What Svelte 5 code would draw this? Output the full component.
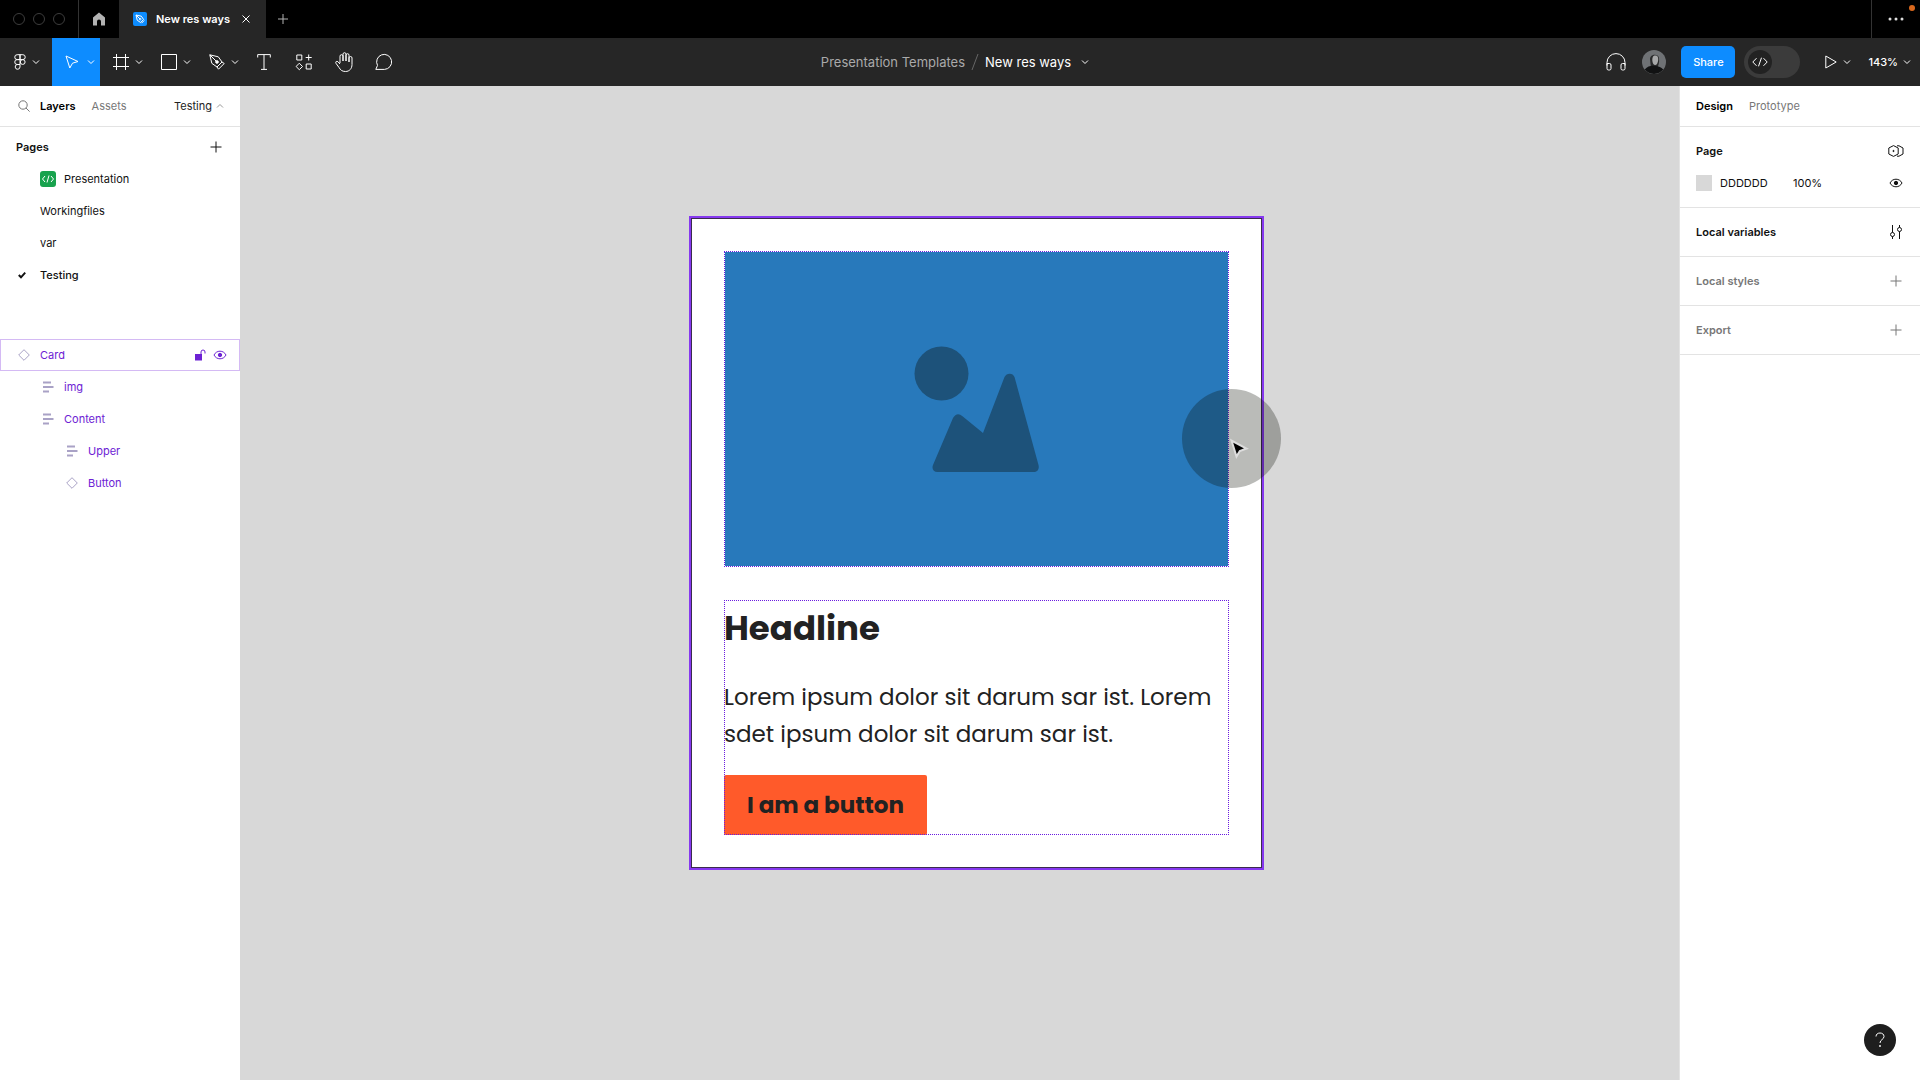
<script lang="ts">
	const pages = [
		{ name: 'Presentation', badge: true },
		{ name: 'Workingfiles' },
		{ name: 'var' },
		{ name: 'Testing', current: true }
	];

	const layers = [
		{ name: 'Card', depth: 0, kind: 'component', hovered: true },
		{ name: 'img', depth: 1, kind: 'stack' },
		{ name: 'Content', depth: 1, kind: 'stack' },
		{ name: 'Upper', depth: 2, kind: 'stack' },
		{ name: 'Button', depth: 2, kind: 'component' }
	];

	const sections = ['Local styles', 'Export'];

	let fill = $state('DDDDDD');
	let opacity = $state('100%');
	let devMode = $state(false);
</script>

{#snippet chevron()}
	<svg class="chevron" width="8" height="8" viewBox="0 0 8 8"><path d="M1 2.500l3 3 3-3" /></svg>
{/snippet}

{#snippet plus()}
	<svg width="12" height="12" viewBox="0 0 12 12"><path d="M6 .5v11M.5 6h11" /></svg>
{/snippet}

{#snippet eye()}
	<svg width="14" height="10" viewBox="0 0 14 10">
		<path d="M1 5C2.300 2.500 4.500 1.200 7 1.200S11.700 2.500 13 5C11.700 7.500 9.500 8.800 7 8.800S2.300 7.500 1 5z" />
		<circle cx="7" cy="5" r="1.700" class="solid" />
	</svg>
{/snippet}

<div class="app">
	<header class="tab-bar">
		<div class="window-dots"><i></i><i></i><i></i></div>
		<button class="home" aria-label="Home">
			<svg width="14" height="16" viewBox="0 0 14 16"><path d="M7 1.500L1 6.500v8H5V10.500a2 2 0 0 1 4 0v4h4v-8z" /></svg>
		</button>
		<div class="file-tab">
			<svg class="file-icon" width="14" height="14" viewBox="0 0 14 14">
				<rect width="14" height="14" rx="2" class="file-bg" />
				<path d="M3 3l1.200 5.200 3.400 2.300 3-3-2.300-3.300zM3 3l4 4M8.500 11.200l2.700-2.700" />
				<circle cx="7.200" cy="7.200" r=".8" />
			</svg>
			<span>New res ways</span>
			<button class="close" aria-label="Close tab">
				<svg width="8" height="8" viewBox="0 0 8 8"><path d="M.5.5l7 7M7.500.5l-7 7" /></svg>
			</button>
		</div>
		<button class="new-tab" aria-label="New tab">
			<svg width="10" height="10" viewBox="0 0 10 10"><path d="M5 0v10M0 5h10" /></svg>
		</button>
		<button class="more" aria-label="More">
			<svg width="16" height="4" viewBox="0 0 16 4"><circle cx="2" cy="2" r="1.500" /><circle cx="8" cy="2" r="1.500" /><circle cx="14" cy="2" r="1.500" /></svg>
			<i class="notice"></i>
		</button>
	</header>

	<nav class="toolbar">
		<div class="tools">
			<button class="tool menu" aria-label="Main menu">
				<svg width="12" height="16" viewBox="0 0 12 16"><path d="M6 .7H3.200a2.400 2.400 0 0 0 0 4.900H6zM6 .7h2.800a2.400 2.400 0 0 1 0 4.900H6zM6 5.600H3.200a2.400 2.400 0 0 0 0 4.900H6zM6 10.500H3.200A2.400 2.400 0 1 0 6 12.900z" /><circle cx="8.700" cy="8" r="2.400" /></svg>
				{@render chevron()}
			</button>
			<button class="tool active" aria-label="Move">
				<svg width="14" height="14" viewBox="0 0 14 14"><path d="M1 1l3.800 12L7.500 8.200 13 6.500z" /></svg>
				{@render chevron()}
			</button>
			<button class="tool" aria-label="Frame">
				<svg width="16" height="16" viewBox="0 0 16 16"><path d="M3.500 0v16M12.500 0v16M0 3.500h16M0 12.500h16" /></svg>
				{@render chevron()}
			</button>
			<button class="tool" aria-label="Rectangle">
				<svg width="16" height="16" viewBox="0 0 16 16"><path d="M.5.5h15v15H.5z" /></svg>
				{@render chevron()}
			</button>
			<button class="tool" aria-label="Pen">
				<svg width="16" height="16" viewBox="0 0 16 16"><path d="M.8.8l2 8.500 5.200 3.700 1.500 2.200 5.700-5.700-2.200-1.500-3.700-5.200zM.8.8l6.400 6.400M8 13l5-5" /><circle cx="8" cy="8" r="1.300" class="filled" /></svg>
				{@render chevron()}
			</button>
			<button class="tool single" aria-label="Text">
				<svg width="14" height="16" viewBox="0 0 14 16"><path d="M.7 3.500V.6h12.600v2.900M7 .6v14.800M4 15.400h6" /></svg>
			</button>
			<button class="tool single" aria-label="Resources">
				<svg width="16" height="16" viewBox="0 0 16 16"><path d="M.8 1h5v5h-5zM10.200 10h5v5h-5zM12.700.5v6M9.700 3.500h6M3.300 9.200l3.200 3.300-3.200 3.200L.1 12.500z" /></svg>
			</button>
			<button class="tool single" aria-label="Hand">
				<svg width="18" height="20" viewBox="0 0 18 20"><path d="M5 11V4.200a1.500 1.500 0 0 1 3 0V9 2.200a1.500 1.500 0 0 1 3 0V9 3.200a1.500 1.500 0 0 1 3 0V10 6a1.500 1.500 0 0 1 3 0v6.500c0 4-2.500 7-6.500 7-3.500 0-5-1.500-6.500-4L.9 11.200c-.7-1.500.9-2.500 2-1.500L5 12" /></svg>
			</button>
			<button class="tool single" aria-label="Comment">
				<svg width="18" height="16" viewBox="0 0 18 16"><path d="M.8 15.400l1.700-4A7.500 7.500 0 1 1 9.500 15.400z" /></svg>
			</button>
		</div>

		<div class="file-name">
			<a href="#project">Presentation Templates</a>
			<svg width="8" height="16" viewBox="0 0 8 16"><path d="M7 0L1 16" /></svg>
			<button>New res ways {@render chevron()}</button>
		</div>

		<div class="session">
			<button class="headphones" aria-label="Audio">
				<svg width="20" height="18" viewBox="0 0 20 18"><path d="M1 12.500V9.500a9 8.900 0 0 1 18 0v3M1 10.500h2.500a1.500 1.500 0 0 1 1.500 1.500v3.500A1.500 1.500 0 0 1 3.500 17h-1A1.500 1.500 0 0 1 1 15.500zM19 10.500h-2.500A1.500 1.500 0 0 0 15 12v3.500a1.500 1.500 0 0 0 1.500 1.500h1a1.500 1.500 0 0 0 1.500-1.500z" /></svg>
			</button>
			<svg class="avatar" width="24" height="24" viewBox="0 0 24 24">
				<circle cx="12" cy="12" r="12" fill="#6f7275" />
				<path d="M8 9c0-5 8-6 9-1 .5 4-.5 8-2 10H9z" fill="#292a2b" />
				<path d="M12.500 5.500c3-.5 4 1.500 3.700 4.500-.3 3-1.500 5-3 5-1.700 0-2.700-2-2.900-4.500-.1-2.500.5-4.700 2.200-5z" fill="#a7a8a9" />
				<path d="M2.700 19.500C6 16 9 15.500 13 16c4 .2 6 1 8.300 3.500a12 12 0 0 1-18.600 0z" fill="#111213" />
			</svg>
			<button class="share">Share</button>
			<label class="dev-mode">
				<input type="checkbox" bind:checked={devMode} aria-label="Dev Mode" />
				<span class="knob"><svg width="16" height="10" viewBox="0 0 16 10"><path d="M4.500 1.200L.8 5l3.700 3.800M11.500 1.200L15.200 5l-3.700 3.800M9.500.7l-3 8.600" /></svg></span>
			</label>
			<button class="present" aria-label="Present">
				<svg width="12" height="14" viewBox="0 0 12 14"><path d="M.8 1v12l10.400-6z" /></svg>
				{@render chevron()}
			</button>
			<button class="zoom">143% {@render chevron()}</button>
		</div>
	</nav>

	<main>
		<aside class="layers-panel">
			<div class="panel-tabs">
				<button class="search" aria-label="Search">
					<svg width="12" height="12" viewBox="0 0 12 12"><circle cx="5" cy="5" r="4.200" /><path d="M8 8l3.600 3.600" /></svg>
				</button>
				<button class="current">Layers</button>
				<button class="assets">Assets</button>
				<button class="page-switch">Testing <svg width="8" height="8" viewBox="0 0 8 8"><path d="M1 5.500l3-3 3 3" /></svg></button>
			</div>
			<div class="pages-head">
				<h2>Pages</h2>
				<button aria-label="Add page">{@render plus()}</button>
			</div>
			<ul class="pages">
				{#each pages as page}
					<li>
						<button class="row" class:selected={page.current}>
							<span class="tick">
								{#if page.current}
									<svg width="8" height="8" viewBox="0 0 8 8"><path d="M.8 4l2.200 2.300 4.200-4.600" /></svg>
								{/if}
							</span>
							{#if page.badge}
								<svg class="badge" width="16" height="16" viewBox="0 0 16 16"><rect width="16" height="16" rx="3" /><path d="M5 5L2.500 8 5 11M11 5l2.500 3L11 11M9 4.500l-2 7" /></svg>
							{/if}
							{page.name}
						</button>
					</li>
				{/each}
			</ul>
			<ul class="layers">
				{#each layers as layer}
					<li class="layer depth-{layer.depth}" class:hovered={layer.hovered}>
						<button class="row">
							{#if layer.kind === 'component'}
								<svg width="12" height="12" viewBox="0 0 12 12"><path d="M6 .7L11.300 6 6 11.300.7 6z" /></svg>
							{:else}
								<svg width="12" height="12" viewBox="0 0 12 12"><path d="M1 1.500h8M1 6h10.500M1 10.500h6" class="bars" /></svg>
							{/if}
							{layer.name}
						</button>
						{#if layer.hovered}
							<button aria-label="Lock">
								<svg width="12" height="12" viewBox="0 0 12 12"><rect x="1.500" y="5.500" width="6" height="5.500" class="solid" /><path d="M7 5.500V3a2 2 0 0 1 4 0v1.500" /></svg>
							</button>
							<button aria-label="Hide">{@render eye()}</button>
						{/if}
					</li>
				{/each}
			</ul>
		</aside>

		<section class="canvas">
			<article class="card">
				<div class="image">
					<svg width="126" height="126" viewBox="0 0 126 126">
						<circle cx="27.500" cy="27.500" r="27" />
						<path d="M39 72c2.500-4.500 6-5 9.500-1.800L69 87 90.500 31c2-4.500 8.500-4.500 10 0L124.500 119c1 4-1 7-5 7H23.500c-4 0-6-3-4.500-7z" />
					</svg>
				</div>
				<div class="content">
					<h1>Headline</h1>
					<p>Lorem ipsum dolor sit darum sar ist. Lorem sdet ipsum dolor sit darum sar ist.</p>
					<button>I am a button</button>
				</div>
			</article>
			<div class="pointer">
				<svg width="18" height="20" viewBox="0 0 18 20"><path d="M1.500 1.500l5 16L9.800 12l6.700-2.500z" /></svg>
			</div>
		</section>

		<aside class="design-panel">
			<div class="panel-tabs">
				<button class="current">Design</button>
				<button>Prototype</button>
			</div>
			<section class="page-section">
				<div class="line">
					<h2>Page</h2>
					<button aria-label="Variable modes">
						<svg width="16" height="12" viewBox="0 0 16 12"><path d="M5.500.6L10.200 3v6l-4.700 2.400L.8 9V3zM9 .8h2L15 3v6l-4 2.200H9" /><circle cx="5.500" cy="6" r=".6" class="solid" /></svg>
					</button>
				</div>
				<div class="line">
					<i class="swatch"></i>
					<input class="hex" bind:value={fill} aria-label="Page colour" />
					<input class="opacity" bind:value={opacity} aria-label="Opacity" />
					<button aria-label="Toggle visibility">{@render eye()}</button>
				</div>
			</section>
			<section class="line">
				<h2>Local variables</h2>
				<button aria-label="Open variables">
					<svg width="14" height="14" viewBox="0 0 14 14"><path d="M3.500 0v7.500M3.500 11.500V14M10.500 0v2.500M10.500 6.500V14" /><circle cx="3.500" cy="9.500" r="2" /><circle cx="10.500" cy="4.500" r="2" /></svg>
				</button>
			</section>
			{#each sections as section}
				<section class="line muted">
					<h2>{section}</h2>
					<button aria-label="Add to {section}">{@render plus()}</button>
				</section>
			{/each}
			<button class="help" aria-label="Help">
				<svg width="10" height="16" viewBox="0 0 10 16"><path d="M1 4.500C1 2.300 2.700 1 5 1s4 1.300 4 3.500C9 7.500 5 7.500 5 11" /><circle cx="5" cy="14" r=".6" /></svg>
			</button>
		</aside>
	</main>
</div>

<style>
	:global(body) {
		margin: 0;
		background: #fff;
	}

	.app {
		--line: #e3e3e3;
		--blue: #0d8cff;
		--purple: #6d22d4;
		display: flex;
		flex-direction: column;
		min-height: 100vh;
		font: 11px/16px Inter, sans-serif;
		color: #111;
	}

	.app * {
		box-sizing: border-box;
	}

	button,
	input {
		margin: 0;
		padding: 0;
		border: 0;
		background: none;
		font: inherit;
		color: inherit;
	}

	button {
		display: flex;
		align-items: center;
		justify-content: center;
	}

	h1,
	h2,
	p,
	ul {
		margin: 0;
		padding: 0;
		list-style: none;
	}

	h2 {
		font-size: 11px;
		font-weight: 600;
	}

	svg {
		flex: none;
		fill: none;
		stroke: currentColor;
		overflow: visible;
	}

	.solid {
		fill: currentColor;
	}

	/* Window tabs */
	.tab-bar {
		display: flex;
		height: 38px;
		background: #000;
		color: #b3b3b3;
	}

	.window-dots {
		display: flex;
		align-items: center;
		gap: 8px;
		width: 79px;
		padding-left: 13px;
		border-right: 1px solid #333;
	}

	.window-dots i {
		width: 12px;
		height: 12px;
		border: 1px solid #3d3d3d;
		border-radius: 50%;
	}

	.home {
		width: 40px;
	}

	.home svg,
	.more svg {
		fill: currentColor;
		stroke: none;
	}

	.file-tab {
		display: flex;
		align-items: center;
		width: 147px;
		padding: 0 16px 0 14px;
		background: #262626;
		color: #fff;
		font-weight: 600;
	}

	.file-icon {
		margin-right: 9px;
	}

	.file-bg {
		fill: var(--blue);
		stroke: none;
	}

	.close {
		margin-left: auto;
	}

	.new-tab {
		width: 34px;
	}

	.more {
		position: relative;
		width: 49px;
		margin-left: auto;
		border-left: 1px solid #333;
		color: #ddd;
	}

	.notice {
		position: absolute;
		top: 5px;
		right: 5px;
		width: 6px;
		height: 6px;
		border-radius: 50%;
		background: #d9681d;
	}

	/* Toolbar */
	.toolbar {
		display: grid;
		grid-template-columns: 1fr auto 1fr;
		height: 48px;
		background: #262626;
		color: #fff;
	}

	.tools,
	.session,
	.file-name {
		display: flex;
		align-items: center;
	}

	.tool {
		justify-content: flex-end;
		gap: 6px;
		width: 48px;
		height: 48px;
		padding-right: 5px;
	}

	.menu {
		width: 52px;
		padding-right: 12px;
	}

	.active {
		gap: 8px;
		background: var(--blue);
	}

	.single {
		justify-content: center;
		width: 40px;
		padding: 0;
	}

	.filled {
		fill: #fff;
	}

	.file-name {
		gap: 6px;
		padding-right: 10px;
		font-size: 13px;
	}

	.file-name a {
		color: #aaa;
		text-decoration: none;
	}

	.file-name > svg {
		color: #666;
	}

	.file-name button {
		gap: 10px;
	}

	.session {
		justify-content: flex-end;
		padding-right: 9px;
		font-weight: 500;
	}

	.headphones {
		margin-right: 16px;
	}

	.avatar {
		margin-right: 15px;
		stroke: none;
	}

	.share {
		width: 54px;
		height: 32px;
		margin-right: 9px;
		border-radius: 5px;
		background: var(--blue);
	}

	.dev-mode {
		display: flex;
		align-items: center;
		width: 56px;
		height: 32px;
		padding: 0 4px;
		margin-right: 25px;
		border-radius: 16px;
		background: #3b3b3b;
	}

	.dev-mode input {
		position: absolute;
		opacity: 0;
	}

	.knob {
		display: grid;
		place-items: center;
		width: 24px;
		height: 24px;
		border-radius: 50%;
		background: #222;
	}

	.dev-mode input:checked + .knob {
		margin-left: auto;
	}

	.present {
		gap: 6px;
		margin-right: 17px;
	}

	.zoom {
		gap: 5px;
	}

	/* Panels */
	main {
		flex: 1;
		display: grid;
		grid-template-columns: 240px minmax(0, 1fr) 241px;
	}

	.panel-tabs {
		display: flex;
		align-items: center;
		gap: 16px;
		height: 41px;
		padding: 0 16px;
		border-bottom: 1px solid var(--line);
		color: #777;
	}

	.current {
		font-weight: 600;
		color: #000;
	}

	.search {
		width: 16px;
		margin-right: -8px;
	}

	.page-switch {
		gap: 4px;
		margin-left: auto;
		color: #222;
	}

	.page-switch svg {
		color: #999;
	}

	.pages-head {
		display: flex;
		align-items: center;
		justify-content: space-between;
		height: 36px;
		padding: 4px 18px 0 16px;
	}

	.row {
		width: 100%;
		height: 32px;
		justify-content: flex-start;
		gap: 8px;
	}

	.pages .row {
		padding-left: 16px;
	}

	.tick {
		display: grid;
		place-items: center;
		width: 12px;
		margin-right: 4px;
	}

	.tick svg {
		stroke-width: 2;
	}

	.badge rect {
		fill: #18a24e;
		stroke: none;
	}

	.badge path {
		stroke: #fff;
	}

	.selected {
		font-weight: 500;
	}

	.layers {
		margin-top: 48px;
		color: var(--purple);
	}

	.layer {
		display: flex;
		align-items: center;
		gap: 7px;
		height: 32px;
		padding: 0 13px 0 18px;
	}

	.layer .row {
		flex: 1;
		gap: 10px;
	}

	.layer .row svg {
		color: #a9a2c6;
	}

	.bars {
		stroke-width: 2;
	}

	.depth-1 {
		padding-left: 42px;
	}

	.depth-2 {
		padding-left: 66px;
	}

	.hovered {
		outline: 1px solid #d4baf4;
		outline-offset: -1px;
	}

	/* Canvas */
	.canvas {
		position: relative;
		overflow: hidden;
		background: #d8d8d8;
	}

	.card {
		position: absolute;
		top: 130px;
		left: 449px;
		display: flex;
		flex-direction: column;
		gap: 33px;
		width: 575px;
		padding: 33px;
		border: 2px solid #8638f0;
		outline: 1px solid #3b2c4d;
		outline-offset: -3px;
		background: #fff;
	}

	.image {
		display: grid;
		place-items: center;
		height: 316px;
		border: 1px dotted #6a1be0;
		background: #2879bb;
		background-clip: padding-box;
	}

	.image svg {
		fill: #1d527a;
		stroke: none;
	}

	.content {
		display: flex;
		flex-direction: column;
		align-items: flex-start;
		height: 235px;
		outline: 1px dotted #6a1be0;
		outline-offset: -1px;
		color: #222;
	}

	.content h1 {
		font: 700 34px/56px Poppins, Inter, sans-serif;
	}

	.content p {
		margin-top: 23px;
		font: 400 23px/37px Poppins, Inter, sans-serif;
	}

	.content button {
		width: 203px;
		height: 60px;
		margin-top: auto;
		border-radius: 2px;
		background: #ff5a2a;
		font: 700 23px/32px Poppins, Inter, sans-serif;
	}

	.pointer {
		position: absolute;
		top: 303px;
		left: 942px;
		display: grid;
		place-items: center;
		width: 99px;
		height: 99px;
		padding: 20px 0 0 14px;
		border-radius: 50%;
		background: rgba(8, 10, 0, 0.28);
	}

	.pointer path {
		fill: #000;
		stroke: #ddd;
		stroke-width: 2;
	}

	/* Design panel */
	.design-panel {
		position: relative;
		border-left: 1px solid var(--line);
	}

	.line {
		display: flex;
		align-items: center;
		height: 32px;
		padding: 0 16px;
	}

	.line button {
		width: 16px;
		margin-left: auto;
	}

	section.line {
		height: 49px;
		border-bottom: 1px solid var(--line);
	}

	.page-section {
		padding: 8px 0;
		border-bottom: 1px solid var(--line);
	}

	.muted {
		color: #777;
	}

	.swatch {
		width: 16px;
		height: 16px;
		margin-right: 8px;
		background: #d8d8d8;
	}

	.hex {
		width: 73px;
	}

	.opacity {
		width: 48px;
	}

	.help {
		position: absolute;
		right: 24px;
		bottom: 24px;
		width: 32px;
		height: 32px;
		border-radius: 50%;
		background: #1e1e1e;
		color: #fff;
	}
</style>
